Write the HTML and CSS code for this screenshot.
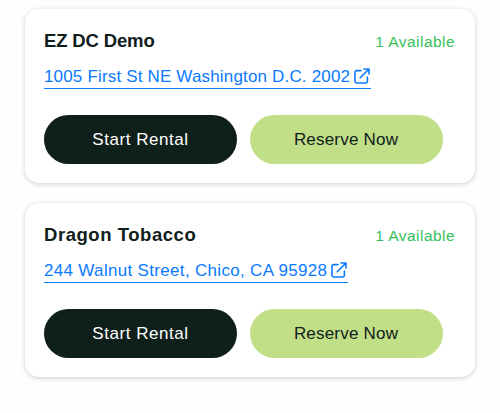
FILE: index.html
```html
<!DOCTYPE html>
<html lang="en">
<head>
  <meta charset="UTF-8" />
  <meta name="viewport" content="width=device-width, initial-scale=1.0"/>
  <title>Rental Locations</title>
  <link rel="stylesheet" href="styles.css">
</head>
<body>

  <div class="locations">

    <div class="card">
      <div class="card-header">
        <h2 class="name-short">EZ DC Demo</h2>
        <span class="available">1 Available</span>
      </div>
      <a class="address" href="#">
        <span>1005 First St NE Washington D.C. 2002</span>
        <svg class="icon" viewBox="0 0 16 16">
          <path d="M7 2.6H2.8A1.8 1.8 0 0 0 1 4.4v8.8A1.8 1.8 0 0 0 2.8 15h8.8a1.8 1.8 0 0 0 1.8-1.8V9" />
          <path d="M10 1h5v5M15 1L6.2 9.8" />
        </svg>
      </a>
      <div class="buttons">
        <button class="btn start">Start Rental</button>
        <button class="btn reserve">Reserve Now</button>
      </div>
    </div>

    <div class="card">
      <div class="card-header">
        <h2>Dragon Tobacco</h2>
        <span class="available">1 Available</span>
      </div>
      <a class="address address-wide" href="#">
        <span>244 Walnut Street, Chico, CA 95928</span>
        <svg class="icon" viewBox="0 0 16 16">
          <path d="M7 2.6H2.8A1.8 1.8 0 0 0 1 4.4v8.8A1.8 1.8 0 0 0 2.8 15h8.8a1.8 1.8 0 0 0 1.8-1.8V9" />
          <path d="M10 1h5v5M15 1L6.2 9.8" />
        </svg>
      </a>
      <div class="buttons">
        <button class="btn start">Start Rental</button>
        <button class="btn reserve">Reserve Now</button>
      </div>
    </div>

  </div>

</body>
</html>
```
FILE: styles.css
```css
* {
  box-sizing: border-box;
}
body {
  font-family: "Liberation Sans", Arial, sans-serif;
  background: #fefefe;
  margin: 0;
  padding: 0;
}
.locations {
  display: flex;
  flex-direction: column;
  gap: 20.4px;
  padding: 9px 25px;
}
.card {
  height: 174px;
  padding: 20px 20px 0 19px;
  background: white;
  border-radius: 14px;
  box-shadow: 0 1px 5px rgba(0,0,0,0.2);
}
.card-header {
  display: flex;
  justify-content: space-between;
  align-items: center;
  height: 24px;
}
h2 {
  margin: 0;
  font-size: 18.5px;
  line-height: 24px;
  letter-spacing: 0.55px;
  color: #0f201b;
}
.name-short {
  letter-spacing: -0.15px;
}
.available {
  padding-top: 2px;
  font-size: 15.5px;
  letter-spacing: 0.45px;
  color: #34c159;
}
.address {
  display: flex;
  align-items: center;
  gap: 4px;
  width: fit-content;
  height: 24px;
  margin-top: 12px;
  padding-top: 1px;
  border-bottom: 1.5px solid #0a7aff;
  font-size: 17px;
  letter-spacing: 0.17px;
  white-space: nowrap;
  color: #0a7aff;
  text-decoration: none;
}
.address-wide {
  letter-spacing: 0.32px;
}
.icon {
  width: 16px;
  height: 16px;
  margin-right: 1px;
  margin-bottom: 3px;
  fill: none;
  stroke: currentColor;
  stroke-width: 1.6;
  stroke-linecap: round;
  stroke-linejoin: round;
}
.buttons {
  display: flex;
  gap: 12.5px;
  margin-top: 25.6px;
}
.btn {
  width: 193px;
  height: 49px;
  padding: 2px 0 0;
  border: none;
  border-radius: 25px;
  font-family: inherit;
  font-size: 17px;
  cursor: pointer;
}
.start {
  background: #0f201b;
  color: white;
  letter-spacing: 0.55px;
}
.reserve {
  background: #c1df87;
  color: #0f201b;
  letter-spacing: 0.2px;
}
```
